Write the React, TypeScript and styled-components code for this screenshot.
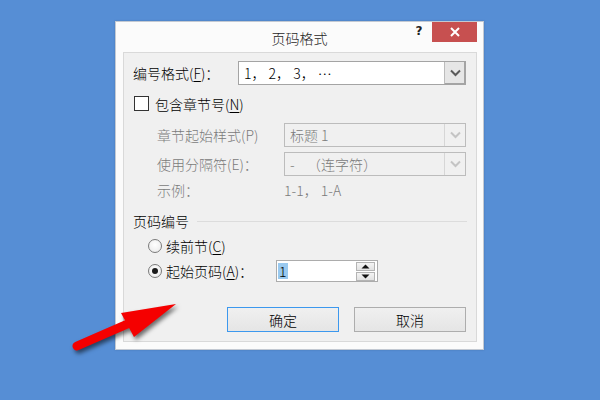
import React from "react";
import styled, { createGlobalStyle } from "styled-components";

const Global = createGlobalStyle`
  html, body { margin: 0; padding: 0; }
  body { font-family: "Noto Sans CJK SC", "Liberation Sans", sans-serif; }
  * { box-sizing: border-box; }
`;

const Desktop = styled.div`
  position: relative;
  width: 600px;
  height: 400px;
  background: #568ed5;
  padding: 21px 0 0 115px;
  overflow: hidden;
`;

const Window = styled.div`
  width: 369px;
  height: 329px;
  background: #fbfbfb;
  border: 1px solid #c3c9d2;
  display: flex;
  flex-direction: column;
  box-shadow: 0 0 2px rgba(0, 0, 0, 0.15);
`;

const TitleBar = styled.div`
  height: 30px;
  display: grid;
  grid-template-columns: 1fr auto 1fr;
`;

const Title = styled.div`
  grid-column: 2;
  padding-top: 8px;
  font-size: 14px;
  line-height: 16px;
  font-weight: 300;
  color: #1e1e1e;
`;

const Controls = styled.div`
  grid-column: 3;
  justify-self: end;
  display: flex;
  align-items: flex-start;
  margin-right: 6px;
`;

const HelpBtn = styled.div`
  width: 26px;
  height: 20px;
  display: flex;
  justify-content: center;
  padding-top: 3px;
  font-family: "DejaVu Sans", sans-serif;
  font-weight: bold;
  font-size: 12px;
  line-height: 12px;
  color: #222;
`;

const CloseBtn = styled.div`
  width: 45px;
  height: 20px;
  background: #c75050;
  display: flex;
  align-items: center;
  justify-content: center;
`;

const Panel = styled.div`
  flex: 1;
  margin: 0 6px 7px 7px;
  background: #f0f0f0;
  border: 1px solid #d9d9d9;
  padding: 8px 9px 0 9px;
  display: flex;
  flex-direction: column;
  font-size: 14px;
  font-weight: 300;
  color: #000;
`;

const Row = styled.div<{ $h: number; $mt?: number; $indent?: number }>`
  display: flex;
  align-items: center;
  height: ${(p) => p.$h}px;
  margin-top: ${(p) => p.$mt ?? 0}px;
  padding-left: ${(p) => p.$indent ?? 0}px;
`;

const Label = styled.div<{ $w?: number; $disabled?: boolean }>`
  width: ${(p) => (p.$w ? `${p.$w}px` : "auto")};
  flex: none;
  line-height: 16px;
  white-space: pre;
  color: ${(p) => (p.$disabled ? "#7b7b7b" : "#000")};
`;

const U = styled.span`
  text-decoration: underline;
  text-underline-offset: 2px;
`;

const Select = styled.div<{ $w: number; $disabled?: boolean }>`
  width: ${(p) => p.$w}px;
  height: 100%;
  flex: none;
  display: flex;
  border: ${(p) => (p.$disabled ? "1px solid #bcbcbc" : "1px solid #a4a4a4")};
  background: ${(p) => (p.$disabled ? "#f0f0f0" : "#fff")};
  color: ${(p) => (p.$disabled ? "#7b7b7b" : "#000")};
`;

const SelectText = styled.div`
  flex: 1;
  display: flex;
  align-items: center;
  padding-left: 5px;
  line-height: 16px;
  white-space: pre;
`;

const SelectArrow = styled.div<{ $disabled?: boolean }>`
  width: 21px;
  flex: none;
  display: flex;
  align-items: center;
  justify-content: center;
  border-left: 1px solid ${(p) => (p.$disabled ? "#d6d6d6" : "#bcbcbc")};
  background: ${(p) => (p.$disabled ? "#f0f0f0" : "#e6e6e6")};
  ${(p) => (p.$disabled ? "" : "box-shadow: inset -1px -1px 0 #a4a4a4;")}
`;

const CheckBox = styled.div`
  width: 15px;
  height: 15px;
  margin-left: 1px;
  margin-right: 6px;
  border: 1px solid #333;
  background: #fff;
  flex: none;
`;

const GroupHeader = styled.div`
  display: flex;
  align-items: center;
  gap: 8px;
  height: 18px;
  margin-top: 12px;
`;

const GroupLine = styled.div`
  flex: 1;
  height: 1px;
  background: #dcdcdc;
`;

const Radio = styled.div<{ $checked?: boolean }>`
  width: 14px;
  height: 14px;
  border-radius: 50%;
  border: 1px solid #7a7a7a;
  background: radial-gradient(circle at 50% 40%, #ffffff, #e8e8e8);
  margin-right: 4px;
  flex: none;
  display: flex;
  align-items: center;
  justify-content: center;
  &::after {
    content: "";
    display: ${(p) => (p.$checked ? "block" : "none")};
    width: 6px;
    height: 6px;
    border-radius: 50%;
    background: #1a1a1a;
  }
`;

const Spin = styled.div`
  margin-left: 23px;
  width: 102px;
  height: 22px;
  border: 1px solid #acacac;
  background: #fff;
  display: flex;
  align-items: center;
  padding: 0 2px 0 1px;
`;

const SpinText = styled.div`
  flex: 1;
  display: flex;
  align-items: center;
`;

const Sel = styled.span`
  display: inline-block;
  height: 16px;
  line-height: 16px;
  background: #99c9ef;
  padding: 0 1px;
`;

const SpinBtns = styled.div`
  display: flex;
  flex-direction: column;
  gap: 1px;
`;

const SpinBtn = styled.div`
  width: 19px;
  height: 9px;
  border: 1px solid #b4b4b4;
  background: linear-gradient(#f4f4f4, #e2e2e2);
  display: flex;
  align-items: center;
  justify-content: center;
`;

const Buttons = styled.div`
  display: flex;
  justify-content: flex-end;
  gap: 15px;
  margin-top: 25px;
  padding-right: 1px;
`;

const Button = styled.div<{ $default?: boolean }>`
  width: 112px;
  height: 25px;
  border: 1px solid ${(p) => (p.$default ? "#3c98ee" : "#adadad")};
  background: linear-gradient(#f0f0f0, #e5e5e5);
  display: flex;
  align-items: center;
  justify-content: center;
  line-height: 16px;
`;

const ArrowSvg = styled.svg`
  position: absolute;
  left: 0;
  top: 0;
  pointer-events: none;
  filter: drop-shadow(2px 3px 2px rgba(0, 0, 0, 0.55));
`;

const Chevron = ({ color }: { color: string }) => (
  <svg width="11" height="8" viewBox="0 0 11 8">
    <path d="M1 1.5 L5.5 6 L10 1.5" fill="none" stroke={color} strokeWidth="2" />
  </svg>
);

export default function App() {
  return (
    <>
      <Global />
      <Desktop>
        <Window>
          <TitleBar>
            <Title>页码格式</Title>
            <Controls>
              <HelpBtn>?</HelpBtn>
              <CloseBtn>
                <svg width="10" height="10" viewBox="0 0 10 10">
                  <path d="M1 1 L9 9 M9 1 L1 9" stroke="#fff" strokeWidth="2" />
                </svg>
              </CloseBtn>
            </Controls>
          </TitleBar>
          <Panel>
            <Row $h={24}>
              <Label $w={105}>
                编号格式(<U>F</U>)：
              </Label>
              <Select $w={228}>
                <SelectText>1， 2， 3， …</SelectText>
                <SelectArrow>
                  <Chevron color="#5a5a5a" />
                </SelectArrow>
              </Select>
            </Row>
            <Row $h={15} $mt={11}>
              <CheckBox />
              <Label>
                包含章节号(<U>N</U>)
              </Label>
            </Row>
            <Row $h={24} $mt={12} $indent={24}>
              <Label $w={127} $disabled>
                章节起始样式(P)
              </Label>
              <Select $w={182} $disabled>
                <SelectText>标题 1</SelectText>
                <SelectArrow $disabled>
                  <Chevron color="#c4c4c4" />
                </SelectArrow>
              </Select>
            </Row>
            <Row $h={24} $mt={5} $indent={24}>
              <Label $w={127} $disabled>
                使用分隔符(E)：
              </Label>
              <Select $w={182} $disabled>
                <SelectText>-    （连字符）</SelectText>
                <SelectArrow $disabled>
                  <Chevron color="#c4c4c4" />
                </SelectArrow>
              </Select>
            </Row>
            <Row $h={20} $mt={4} $indent={24}>
              <Label $w={127} $disabled>
                示例：
              </Label>
              <Label $disabled>1-1， 1-A</Label>
            </Row>
            <GroupHeader>
              <Label>页码编号</Label>
              <GroupLine />
            </GroupHeader>
            <Row $h={20} $mt={6} $indent={15}>
              <Radio />
              <Label>
                续前节(<U>C</U>)
              </Label>
            </Row>
            <Row $h={22} $mt={4} $indent={15}>
              <Radio $checked />
              <Label>
                起始页码(<U>A</U>)：
              </Label>
              <Spin>
                <SpinText>
                  <Sel>1</Sel>
                </SpinText>
                <SpinBtns>
                  <SpinBtn>
                    <svg width="9" height="5" viewBox="0 0 9 5">
                      <path d="M0.5 4.5 L4.5 0.5 L8.5 4.5 Z" fill="#111" />
                    </svg>
                  </SpinBtn>
                  <SpinBtn>
                    <svg width="9" height="5" viewBox="0 0 9 5">
                      <path d="M0.5 0.5 L4.5 4.5 L8.5 0.5 Z" fill="#111" />
                    </svg>
                  </SpinBtn>
                </SpinBtns>
              </Spin>
            </Row>
            <Buttons>
              <Button $default>确定</Button>
              <Button>取消</Button>
            </Buttons>
          </Panel>
        </Window>
        <ArrowSvg width="600" height="400" viewBox="0 0 600 400">
          <line x1="77" y1="346" x2="132" y2="322" stroke="#f50000" strokeWidth="9" strokeLinecap="round" />
          <polygon points="176,304 121,313 134,337" fill="#f50000" />
        </ArrowSvg>
      </Desktop>
    </>
  );
}
